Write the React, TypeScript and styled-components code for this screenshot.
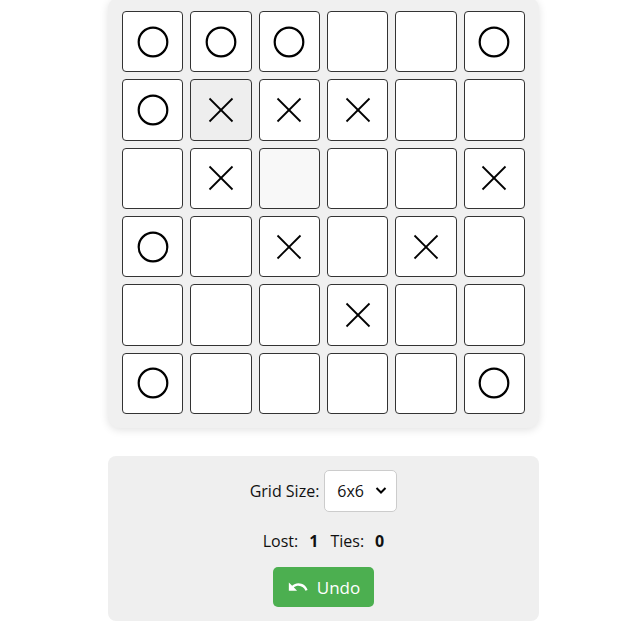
import React from "react";
import styled, { createGlobalStyle } from "styled-components";
import { MdUndo } from "react-icons/md";

const Global = createGlobalStyle`
  html, body { margin: 0; padding: 0; background: #fff; }
  body { font-family: "Segoe UI", "Open Sans", "Noto Sans", sans-serif; color: #111; }
`;

const Page = styled.div`
  display: flex;
  flex-direction: column;
  align-items: center;
  padding-left: 4px;
  margin-top: -3px;
`;

const Board = styled.div`
  width: 403px;
  padding: 14px;
  background: #f0f0f0;
  border-radius: 12px;
  box-shadow: 0 2px 8px rgba(0, 0, 0, 0.12);
  display: grid;
  grid-template-columns: repeat(6, 1fr);
  gap: 7px;
`;

const Cell = styled.div<{ $bg: string }>`
  aspect-ratio: 1;
  box-sizing: border-box;
  border: 1px solid #333;
  border-radius: 4px;
  background: ${(p) => p.$bg};
  display: flex;
  align-items: center;
  justify-content: center;
`;

const Panel = styled.div`
  width: 431px;
  margin-top: 28px;
  box-sizing: border-box;
  padding: 14px;
  background: #efefef;
  border-radius: 8px;
  display: flex;
  flex-direction: column;
  align-items: center;
`;

const SizeRow = styled.div`
  display: flex;
  align-items: center;
  gap: 5px;
  font-size: 16px;
`;

const SelectWrap = styled.div`
  position: relative;
  width: 73px;
  height: 42px;
`;

const Select = styled.select`
  appearance: none;
  width: 100%;
  height: 100%;
  box-sizing: border-box;
  border: 1px solid #ccc;
  border-radius: 5px;
  background: #fff;
  font-family: inherit;
  font-size: 16px;
  color: #111;
  padding: 0 0 0 12px;
`;

const Chevron = styled.svg`
  position: absolute;
  right: 10px;
  top: 16px;
  pointer-events: none;
`;

const Stats = styled.div`
  margin-top: 18px;
  display: flex;
  align-items: center;
  font-size: 16px;
  gap: 12px;
`;

const Num = styled.b`
  font-weight: 700;
  margin-left: -1px;
`;

const UndoButton = styled.button`
  margin-top: 15px;
  width: 101px;
  height: 40px;
  border: none;
  border-radius: 5px;
  background: #4caf50;
  color: #fff;
  font-family: inherit;
  font-size: 17px;
  display: flex;
  align-items: center;
  justify-content: center;
  gap: 8px;
`;

const O = () => (
  <svg width="34" height="34" viewBox="0 0 34 34">
    <circle cx="17" cy="17" r="14.3" fill="none" stroke="#000" strokeWidth="2.2" />
  </svg>
);

const X = () => (
  <svg width="26" height="26" viewBox="0 0 26 26">
    <line x1="1.5" y1="1.5" x2="24.5" y2="24.5" stroke="#000" strokeWidth="1.8" />
    <line x1="24.5" y1="1.5" x2="1.5" y2="24.5" stroke="#000" strokeWidth="1.8" />
  </svg>
);

const board = [
  "OOO..O",
  "OXXX..",
  ".X...X",
  "O.X.X.",
  "...X..",
  "O....O",
];

const bgFor = (r: number, c: number) =>
  r === 1 && c === 1 ? "#eeeeee" : r === 2 && c === 2 ? "#f8f8f8" : "#ffffff";

export default function App() {
  return (
    <>
      <Global />
      <Page>
        <Board>
          {board.flatMap((row, r) =>
            row.split("").map((ch, c) => (
              <Cell key={`${r}-${c}`} $bg={bgFor(r, c)}>
                {ch === "O" ? <O /> : ch === "X" ? <X /> : null}
              </Cell>
            ))
          )}
        </Board>
        <Panel>
          <SizeRow>
            <label>Grid Size:</label>
            <SelectWrap>
              <Select defaultValue="6">
                <option value="6">6x6</option>
              </Select>
              <Chevron width="12" height="9" viewBox="0 0 12 9">
                <polyline points="1.5,2 6,6.5 10.5,2" fill="none" stroke="#000" strokeWidth="2" />
              </Chevron>
            </SelectWrap>
          </SizeRow>
          <Stats>
            <span>Lost:</span>
            <Num>1</Num>
            <span>Ties:</span>
            <Num>0</Num>
          </Stats>
          <UndoButton>
            <MdUndo size={22} />
            Undo
          </UndoButton>
        </Panel>
      </Page>
    </>
  );
}
